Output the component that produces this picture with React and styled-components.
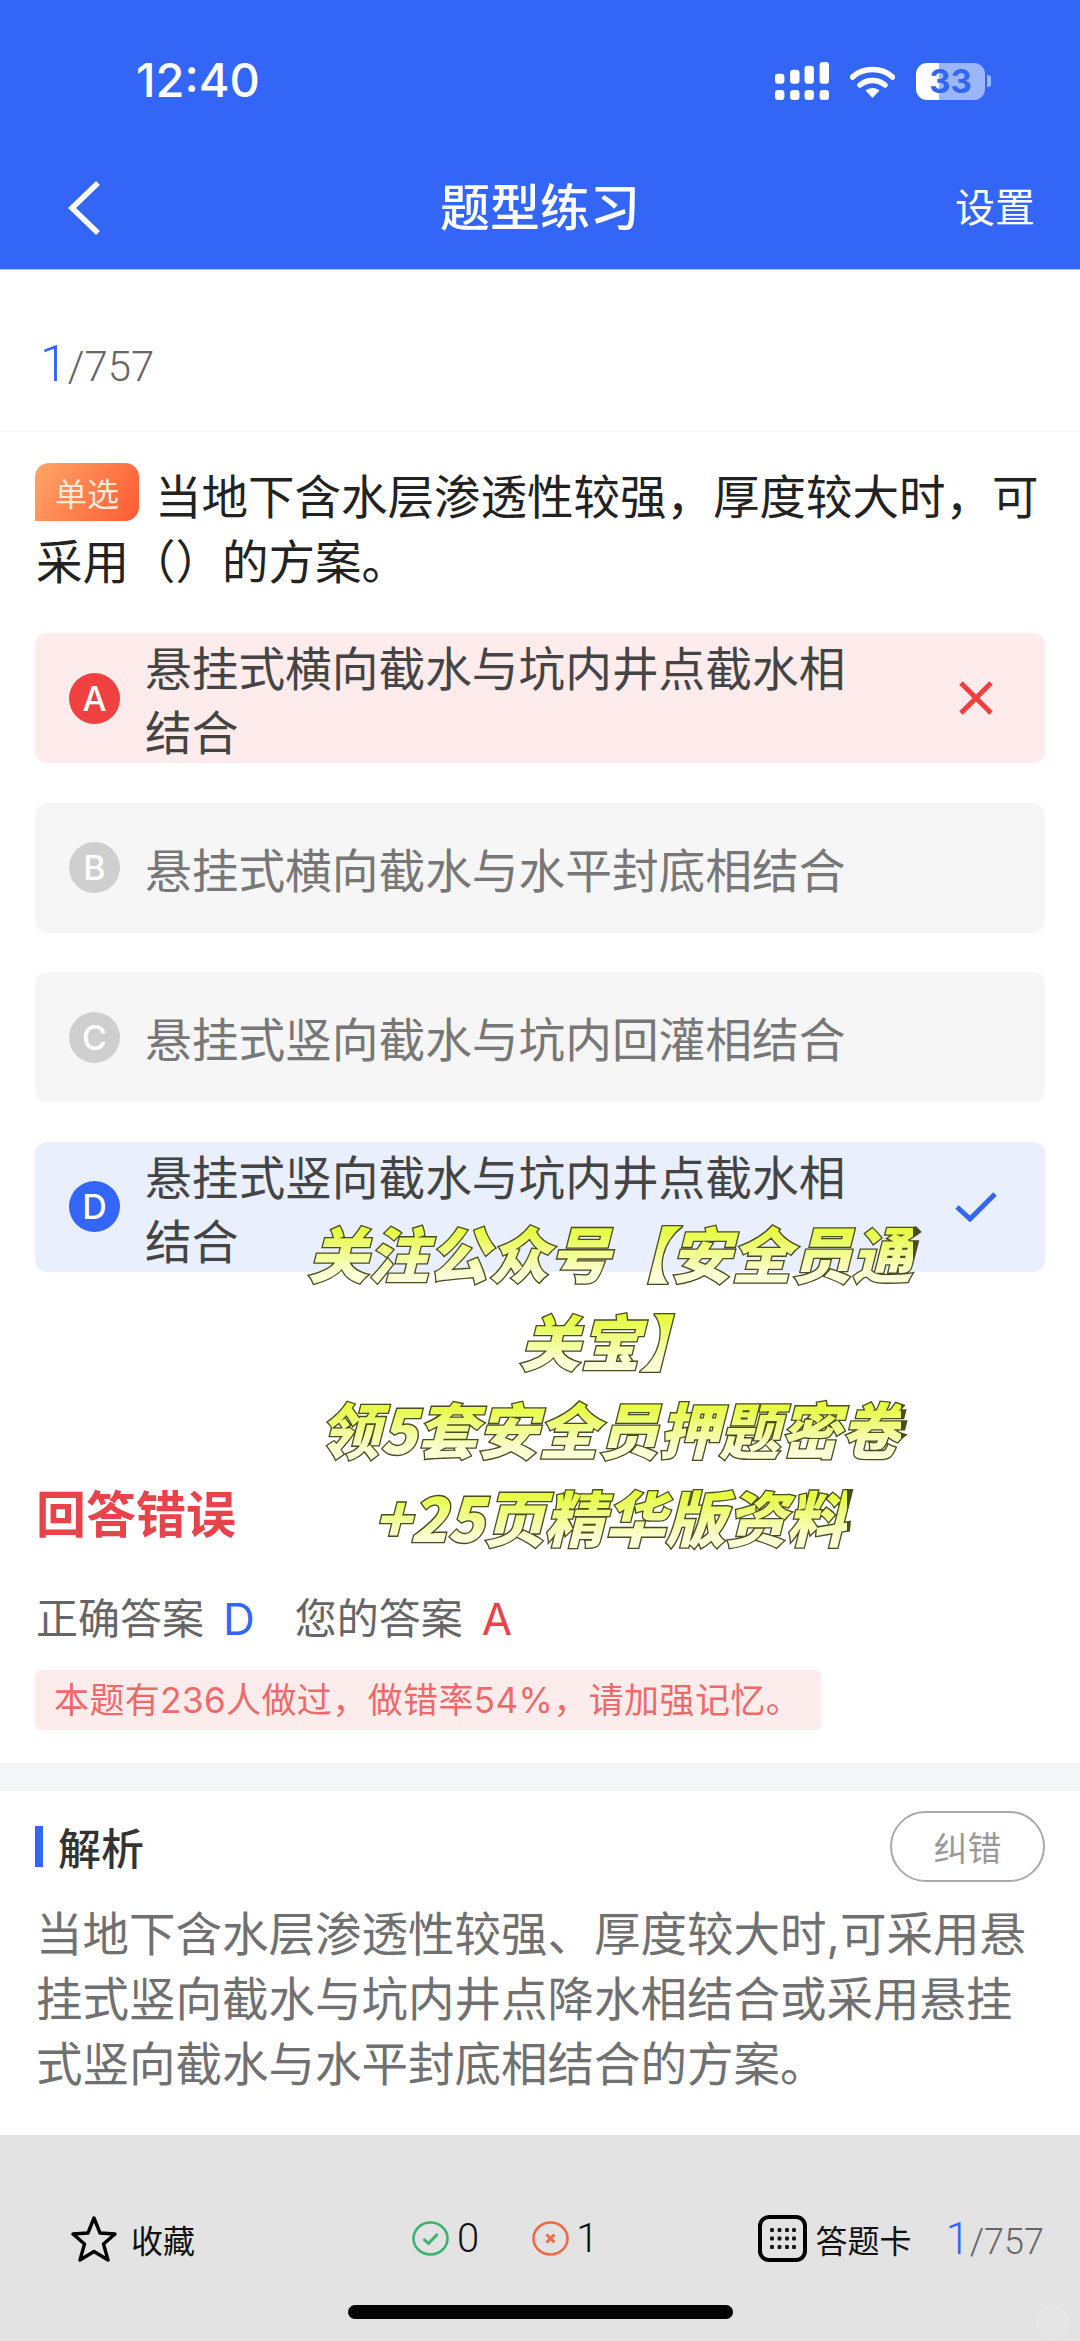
import React from "react";
import styled, { createGlobalStyle } from "styled-components";

const BLUE = "#3366f6";
const FONT = `Inter, "Noto Sans CJK SC", sans-serif`;
const CJK = `"Noto Sans CJK SC", sans-serif`;

const Global = createGlobalStyle`
  html, body {
    margin: 0;
    padding: 0;
    background: #fff;
  }
`;

const Page = styled.div`
  position: relative;
  width: 1080px;
  height: 2341px;
  overflow: hidden;
  display: flex;
  flex-direction: column;
  background: #fff;
  font-family: ${FONT};
`;

const Header = styled.header`
  height: 269px;
  flex: none;
  background: ${BLUE};
  border-bottom: 1px solid #a9c1fb;
  color: #fff;
`;

const StatusBar = styled.div`
  height: 162px;
  box-sizing: border-box;
  padding: 56px 89px 0 136px;
  display: flex;
  align-items: flex-start;
  justify-content: space-between;
`;

const Time = styled.span`
  font-size: 47px;
  line-height: 48px;
  font-weight: 500;
  font-family: Inter, sans-serif;
`;

const StatusIcons = styled.div`
  display: flex;
  align-items: center;
  margin-top: 6px;
`;

const Battery = styled.div`
  width: 69px;
  height: 37px;
  margin-left: 21px;
  border-radius: 11px;
  background: linear-gradient(to right, #fff 33%, #9cb6fb 33%);
  color: ${BLUE};
  font: 700 33px/37px Inter, sans-serif;
  text-align: center;
`;

const BatteryNub = styled.div`
  width: 4px;
  height: 12px;
  margin-left: 2px;
  border-radius: 0 3px 3px 0;
  background: #9cb6fb;
`;

const NavBar = styled.div`
  position: relative;
  height: 107px;
  display: flex;
  align-items: center;
  justify-content: center;
`;

const BackIcon = styled.svg`
  position: absolute;
  left: 66px;
  top: 18px;
`;

const NavTitle = styled.div`
  font-family: ${CJK};
  font-size: 50px;
  font-weight: 500;
  margin-top: -24px;
`;

const NavAction = styled.div`
  position: absolute;
  right: 45px;
  top: 15px;
  font-family: ${CJK};
  font-size: 40px;
  line-height: 56px;
`;

const CounterRow = styled.div`
  height: 162px;
  flex: none;
  box-sizing: border-box;
  padding: 27px 0 0 40px;
  display: flex;
  align-items: center;
  border-bottom: 1px solid #f3f3f3;
`;

const Counter = styled.div`
  font-family: Roboto, sans-serif;
  font-weight: 300;
  color: #666;
  font-size: ${(p) => p.$size}px;
  line-height: 1;
`;

const CounterNow = styled.span`
  color: ${BLUE};
  font-size: ${(p) => p.$size}px;
`;

const Question = styled.div`
  padding: 29px 35px 0 36px;
  font-size: 46.5px;
  line-height: 65px;
  color: #222;
  font-family: ${CJK};
`;

const TypeBadge = styled.span`
  display: inline-block;
  width: 104px;
  height: 58px;
  margin: 2px 16px 0 -1px;
  vertical-align: top;
  border-radius: 14px 14px 14px 0;
  background: linear-gradient(120deg, #ffa666, #ff5a33);
  color: #ffe9d8;
  font-size: 32px;
  line-height: 58px;
  text-align: center;
`;

const OptionList = styled.div`
  padding: 42px 35px 0;
  display: flex;
  flex-direction: column;
  gap: 39.5px;
`;

const tones = {
  wrong: { bg: "#fdeceb", dot: "#f0403f", text: "#444" },
  idle: { bg: "#f6f6f6", dot: "#cfcfcf", text: "#777" },
  right: { bg: "#e9effd", dot: BLUE, text: "#444" },
};

const Option = styled.div`
  height: 130px;
  box-sizing: border-box;
  padding: 0 52px 0 34px;
  display: flex;
  align-items: center;
  border-radius: 12px;
  background: ${(p) => tones[p.$tone].bg};
`;

const OptionKey = styled.div`
  width: 51px;
  height: 51px;
  flex: none;
  border-radius: 50%;
  background: ${(p) => tones[p.$tone].dot};
  color: #fff;
  font: 500 34px/51px Inter, sans-serif;
  text-align: center;
`;

const OptionText = styled.div`
  width: 720px;
  margin-left: 25px;
  font-family: ${CJK};
  font-size: 46.7px;
  line-height: 64px;
  color: ${(p) => tones[p.$tone].text};
`;

const OptionMark = styled.svg`
  margin-left: auto;
`;

const Result = styled.div`
  padding: 214px 35px 0 36px;
`;

const ResultTitle = styled.div`
  font-family: ${CJK};
  font-size: 50px;
  line-height: 50px;
  font-weight: 700;
  color: #e8434b;
`;

const Answers = styled.div`
  margin-top: 58px;
  display: flex;
  align-items: center;
  font-size: 42px;
  line-height: 50px;
  color: #666;
`;

const AnswerGroup = styled.span`
  display: flex;
  gap: 19px;
  margin-right: 40px;
`;

const AnswerKey = styled.span`
  color: ${(p) => p.$color};
  font-size: 44px;
`;

const Tip = styled.div`
  box-sizing: border-box;
  width: 786px;
  height: 60px;
  margin: 26px 0 0 -1px;
  padding-left: 19px;
  border-radius: 6px;
  background: #fdecec;
  color: #ee6a6a;
  font-size: 35px;
  line-height: 60px;
  letter-spacing: 0.4px;
  white-space: nowrap;
`;

const Band = styled.div`
  height: 28px;
  flex: none;
  margin-top: 33px;
  background: #f4f7f8;
`;

const Analysis = styled.section`
  padding: 20px 35px 0 36px;
  flex: 1;
`;

const AnalysisHead = styled.div`
  height: 71px;
  display: flex;
  align-items: center;
  justify-content: space-between;
`;

const AnalysisTitle = styled.div`
  display: flex;
  align-items: center;
  gap: 15px;
  font-family: ${CJK};
  font-size: 43px;
  font-weight: 500;
  color: #333;
  margin-left: -1px;
  &::before {
    content: "";
    width: 8px;
    height: 41px;
    background: ${BLUE};
  }
`;

const FixButton = styled.div`
  width: 155px;
  height: 71px;
  box-sizing: border-box;
  border: 2px solid #aaa;
  border-radius: 36px;
  color: #999;
  font-family: ${CJK};
  font-size: 34px;
  line-height: 67px;
  text-align: center;
`;

const AnalysisText = styled.p`
  margin: 20px 0 0;
  font-size: 46.5px;
  line-height: 65px;
  color: #707070;
`;

const Footer = styled.footer`
  height: 206px;
  flex: none;
  position: relative;
  background: #e3e3e3;
`;

const ToolRow = styled.div`
  padding: 80px 0 0 71px;
  display: flex;
  align-items: center;
  height: 47px;
`;

const Tool = styled.div`
  display: flex;
  align-items: center;
  gap: ${(p) => p.$gap}px;
  margin-left: ${(p) => p.$left || 0}px;
  color: #111;
  font-family: ${CJK};
  font-size: 32px;
`;

const Tally = styled.span`
  font-family: Roboto, sans-serif;
  font-weight: 300;
  font-size: 40px;
`;

const HomeBar = styled.div`
  position: absolute;
  left: 348px;
  bottom: 22px;
  width: 385px;
  height: 14px;
  border-radius: 7px;
  background: #000;
`;

const TouchDot = styled.div`
  position: absolute;
  right: 10px;
  bottom: 2px;
  width: 34px;
  height: 34px;
  border-radius: 50%;
  background: rgba(255, 255, 255, 0.12);
`;

const Promo = styled.div`
  position: absolute;
  left: 300px;
  top: 1208px;
  width: 620px;
  text-align: center;
  font-family: ${CJK};
  font-size: 60.5px;
  line-height: 88px;
  font-weight: 900;
  font-style: italic;
`;

const PromoLine = styled.div`
  position: relative;
  width: fit-content;
  margin: 0 auto;
  color: #4a4c22;
  -webkit-text-stroke: 2.6px #4a4c22;
  &::before {
    content: attr(data-text);
    position: absolute;
    inset: 0;
    -webkit-text-stroke: 0;
    background: linear-gradient(to bottom, #e6fc3e 25%, #fbffd6 75%);
    -webkit-background-clip: text;
    background-clip: text;
    -webkit-text-fill-color: transparent;
  }
`;

const SignalIcon = () => (
  <svg width="54" height="38" viewBox="0 0 161 113" fill="#fff">
    <rect x="0" y="35" width="28" height="30" rx="9" />
    <rect x="45" y="23" width="28" height="42" rx="9" />
    <rect x="88" y="11" width="28" height="54" rx="9" />
    <rect x="133" y="0" width="28" height="65" rx="9" />
    <rect x="0" y="83" width="28" height="30" rx="9" />
    <rect x="45" y="83" width="28" height="30" rx="9" />
    <rect x="88" y="83" width="28" height="30" rx="9" />
    <rect x="133" y="83" width="28" height="30" rx="9" />
  </svg>
);

const WifiIcon = () => (
  <svg width="45" height="33" viewBox="0 0 45 33" style={{ marginLeft: 21 }}>
    <path d="M2.5 12 C13 2 32 2 42.5 12" fill="none" stroke="#fff" strokeWidth="5.5" strokeLinecap="round" />
    <path d="M10 20 C17 14 28 14 35 20" fill="none" stroke="#fff" strokeWidth="5.5" strokeLinecap="round" />
    <path d="M15.5 25.5 C19.5 22 25.5 22 29.5 25.5 L22.5 33 Z" fill="#fff" />
  </svg>
);

const Star = () => (
  <svg width="46" height="46" viewBox="0 0 46 46">
    <path
      d="M23 2 L29 17 L44 18 L32.5 28 L37 44 L23 35.5 L9 44 L13.5 28 L2 18 L17 17 Z"
      fill="none"
      stroke="#000"
      strokeWidth="3.4"
      strokeLinejoin="round"
    />
  </svg>
);

const RoundMark = ({ color, kind }) => (
  <svg width="37" height="35" viewBox="0 0 37 35">
    <ellipse cx="18.5" cy="17.5" rx="17" ry="16" fill="none" stroke={color} strokeWidth="2.6" />
    {kind === "check" ? (
      <path d="M11.5 18 L16.5 22.5 L25.5 13" fill="none" stroke={color} strokeWidth="3" />
    ) : (
      <path d="M14.5 13.5 L22.5 21.5 M22.5 13.5 L14.5 21.5" fill="none" stroke={color} strokeWidth="3" />
    )}
  </svg>
);

const CardIcon = () => (
  <svg width="49" height="47" viewBox="0 0 49 47">
    <rect x="2" y="2" width="45" height="43" rx="9" fill="none" stroke="#000" strokeWidth="4" />
    {[15, 23.5, 32].map((y) =>
      [14, 21.5, 29, 36].map((x) => (
        <rect key={`${x}-${y}`} x={x - 1.9} y={y - 1.9} width="3.8" height="3.8" rx="1" fill="#111" />
      ))
    )}
  </svg>
);

const options = [
  { key: "A", tone: "wrong", text: "悬挂式横向截水与坑内井点截水相结合" },
  { key: "B", tone: "idle", text: "悬挂式横向截水与水平封底相结合" },
  { key: "C", tone: "idle", text: "悬挂式竖向截水与坑内回灌相结合" },
  { key: "D", tone: "right", text: "悬挂式竖向截水与坑内井点截水相结合" },
];

const promoLines = ["关注公众号【安全员通", "关宝】", "领5套安全员押题密卷", "+25页精华版资料"];

const App = () => {
  return (
    <Page>
      <Global />
      <Header>
        <StatusBar>
          <Time>12:40</Time>
          <StatusIcons>
            <SignalIcon />
            <WifiIcon />
            <Battery>33</Battery>
            <BatteryNub />
          </StatusIcons>
        </StatusBar>
        <NavBar>
          <BackIcon width="36" height="56" viewBox="0 0 36 56">
            <path d="M32 3 L6 28 L32 53" fill="none" stroke="#fff" strokeWidth="5.5" />
          </BackIcon>
          <NavTitle>题型练习</NavTitle>
          <NavAction>设置</NavAction>
        </NavBar>
      </Header>

      <CounterRow>
        <Counter $size={42}>
          <CounterNow $size={50}>1</CounterNow>/757
        </Counter>
      </CounterRow>

      <Question>
        <TypeBadge>单选</TypeBadge>
        当地下含水层渗透性较强，厚度较大时，可采用（）的方案。
      </Question>

      <OptionList>
        {options.map((o) => (
          <Option key={o.key} $tone={o.tone}>
            <OptionKey $tone={o.tone}>{o.key}</OptionKey>
            <OptionText $tone={o.tone}>{o.text}</OptionText>
            {o.tone === "wrong" && (
              <OptionMark width="34" height="34" viewBox="0 0 34 34">
                <path d="M2 2 L32 32 M32 2 L2 32" stroke="#f0403f" strokeWidth="5" />
              </OptionMark>
            )}
            {o.tone === "right" && (
              <OptionMark width="42" height="30" viewBox="0 0 42 30" style={{ marginRight: -4 }}>
                <path d="M2 15 L15 27 L40 2" fill="none" stroke={BLUE} strokeWidth="5" />
              </OptionMark>
            )}
          </Option>
        ))}
      </OptionList>

      <Result>
        <ResultTitle>回答错误</ResultTitle>
        <Answers>
          <AnswerGroup>
            正确答案 <AnswerKey $color={BLUE}>D</AnswerKey>
          </AnswerGroup>
          <AnswerGroup>
            您的答案 <AnswerKey $color="#e8434b">A</AnswerKey>
          </AnswerGroup>
        </Answers>
        <Tip>本题有236人做过，做错率54%，请加强记忆。</Tip>
      </Result>

      <Band />

      <Analysis>
        <AnalysisHead>
          <AnalysisTitle>解析</AnalysisTitle>
          <FixButton>纠错</FixButton>
        </AnalysisHead>
        <AnalysisText>
          当地下含水层渗透性较强、厚度较大时,可采用悬挂式竖向截水与坑内井点降水相结合或采用悬挂式竖向截水与水平封底相结合的方案。
        </AnalysisText>
      </Analysis>

      <Footer>
        <ToolRow>
          <Tool $gap={14}>
            <Star />
            收藏
          </Tool>
          <Tool $gap={8} $left={217}>
            <RoundMark color="#3cb371" kind="check" />
            <Tally>0</Tally>
          </Tool>
          <Tool $gap={7} $left={53}>
            <RoundMark color="#ef6a47" kind="cross" />
            <Tally>1</Tally>
          </Tool>
          <Tool $gap={8} $left={160}>
            <CardIcon />
            答题卡
          </Tool>
          <Tool $gap={0} $left={34}>
            <Counter $size={36}>
              <CounterNow $size={44}>1</CounterNow>/757
            </Counter>
          </Tool>
        </ToolRow>
        <HomeBar />
        <TouchDot />
      </Footer>

      <Promo>
        {promoLines.map((line) => (
          <PromoLine key={line} data-text={line}>
            {line}
          </PromoLine>
        ))}
      </Promo>
    </Page>
  );
};

export default App;
